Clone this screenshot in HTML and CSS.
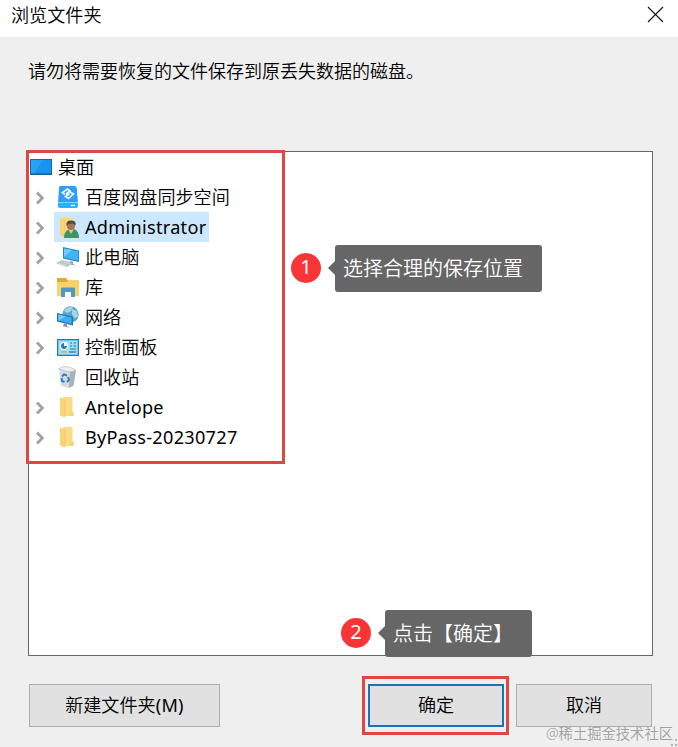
FILE: index.html
```html
<!DOCTYPE html>
<html lang="zh-CN">
<head>
    <meta charset="UTF-8">
    <meta name="viewport" content="width=device-width, initial-scale=1.0">
    <title>浏览文件夹</title>
    <link rel="stylesheet" href="styles.css">
</head>
<body>

<!-- 公用图形 -->
<svg class="defs" width="0" height="0">
    <symbol id="chevron" viewBox="0 0 12 16">
        <path d="M3 3.500 L8.300 9 L3 14.500" fill="none" stroke="#a3a3a3" stroke-width="2.900"/>
    </symbol>
    <symbol id="folder" viewBox="0 0 24 24">
        <path d="M7 2h9.500v14l1 1v4H7z" fill="#fbdc85"/>
        <path d="M4 2.500l5 2v18L4 20.500z" fill="#f8d477"/>
        <path d="M9 4.500v17" stroke="#eec466" stroke-width=".8"/>
        <path d="M14 17h3.500v4H14z" fill="#f6d278"/>
    </symbol>
</svg>

<div class="dialog">
    <header class="titlebar">
        <span class="title">浏览文件夹</span>
        <svg class="close" width="17" height="17" viewBox="0 0 17 17">
            <path d="M1 1L16 16M16 1L1 16" stroke="#111" stroke-width="1.100"/>
        </svg>
    </header>

    <p class="message">请勿将需要恢复的文件保存到原丢失数据的磁盘。</p>

    <div class="tree">
        <div class="row root">
            <svg class="icon" width="24" height="24" viewBox="0 0 24 24">
                <rect x="1.500" y="4.500" width="21" height="15" fill="#1595ee" stroke="#17659c"/>
                <path d="M2 5h12L5 19H2z" fill="#35adf8" opacity=".6"/>
                <path d="M2 19h20" stroke="#0f5f9d"/>
            </svg>
            <span class="label">桌面</span>
        </div>
        <div class="row">
            <svg class="arrow" width="12" height="16"><use href="#chevron"/></svg>
            <svg class="icon" width="24" height="24" viewBox="0 0 24 24">
                <path d="M4.500 1h14q2 0 2.300 2L22 18H2L3 3q0-2 1.500-2z" fill="#2f9dfa"/>
                <path d="M2 17h20v4q0 2-2 2H4q-2 0-2-2z" fill="#25b2f7"/>
                <path d="M2 17.500h20" stroke="#9adfff" stroke-width=".8"/>
                <path d="M15 20.500h4" stroke="#fff" stroke-width="1.300"/>
                <path d="M9 9.500L6.500 7.500l5-3.500 2.500 2-4 3M14 7l3.500 2-5 4.500L9.500 11.500l4-3" fill="none" stroke="#e9f8ff" stroke-width="1.700"/>
            </svg>
            <span class="label">百度网盘同步空间</span>
        </div>
        <div class="row">
            <svg class="arrow" width="12" height="16"><use href="#chevron"/></svg>
            <svg class="icon" width="24" height="24" viewBox="0 0 24 24">
                <use href="#folder"/>
                <path d="M8 23q0-7 5-8.500l5-.5q5 2 5 9z" fill="#419267"/>
                <path d="M12 14l3 5 3-5z" fill="#e7c29b"/>
                <circle cx="15" cy="11" r="4" fill="#a6744f"/>
                <path d="M10.500 11q-1-6 5-5.500 5 0 4 5l-3-2-4 .5z" fill="#514a43"/>
            </svg>
            <span class="label latin selected">Administrator</span>
        </div>
        <div class="row">
            <svg class="arrow" width="12" height="16"><use href="#chevron"/></svg>
            <svg class="icon" width="24" height="24" viewBox="0 0 24 24">
                <path d="M7 2l16 3.500v11.500L7 13.500z" fill="#2388cf"/>
                <path d="M8 3.500l14 3v9L8 12.500z" fill="#3eb3f5"/>
                <path d="M8 3.500l8 1.600L8 12z" fill="#70caf9"/>
                <path d="M14 16l3 .7v2.300l3 1.500-6-1z" fill="#86939b"/>
                <path d="M0 18l6-3 11 3-6 4z" fill="#b9c1c7"/>
                <path d="M2 18l9 2.500M5 16.500l9 2.500" stroke="#d9dfe3" stroke-width=".8"/>
            </svg>
            <span class="label">此电脑</span>
        </div>
        <div class="row">
            <svg class="arrow" width="12" height="16"><use href="#chevron"/></svg>
            <svg class="icon" width="24" height="24" viewBox="0 0 24 24">
                <path d="M1 3h9l2 2.500h11V21H1z" fill="#dfaa32"/>
                <path d="M1 7h10l2-2h10v16H1z" fill="#fbd269"/>
                <path d="M5 22v-8.500q0-1 1-1h12q1 0 1 1V22h-4v-5H9v5z" fill="#4b9bc5"/>
                <path d="M9 17h6v5H9z" fill="#fff"/>
            </svg>
            <span class="label">库</span>
        </div>
        <div class="row">
            <svg class="arrow" width="12" height="16"><use href="#chevron"/></svg>
            <svg class="icon" width="24" height="24" viewBox="0 0 24 24">
                <circle cx="14.500" cy="9.500" r="8.200" fill="#5aa7ca"/>
                <path d="M8 6q4-5 9-4l-2 4-4 2zM16 4l5 2 1 6-4 1-2-4z" fill="#a6d5e7"/>
                <path d="M1 8l16 3.500v9L1 16.500z" fill="#2379b9"/>
                <path d="M2.500 9.500l13 3v6.200L2.500 15.500z" fill="#3eb0f2"/>
                <path d="M2.500 9.500l7.500 2-7.500 4z" fill="#76c9f6"/>
                <path d="M8 18.500l3 .8v2l3 1.500-7-1.500z" fill="#85939c"/>
            </svg>
            <span class="label">网络</span>
        </div>
        <div class="row">
            <svg class="arrow" width="12" height="16"><use href="#chevron"/></svg>
            <svg class="icon" width="24" height="24" viewBox="0 0 24 24">
                <rect x="1.500" y="4.500" width="21" height="16" fill="#69caf1" stroke="#237fa8"/>
                <rect x="3" y="6" width="18" height="13" fill="#a3e0f7"/>
                <circle cx="8" cy="11" r="4" fill="#fff"/>
                <path d="M8 8a3 3 0 1 0 3 3H8z" fill="#237fb6"/>
                <path d="M14 8h2M17.500 8H20M14 11h2M17.500 11H20M14 14h6" stroke="#21739f" stroke-width="1.200"/>
                <path d="M5 17h6" stroke="#e99631" stroke-width="1.200"/>
                <path d="M13 17h7" stroke="#21739f" stroke-width="1.200"/>
            </svg>
            <span class="label">控制面板</span>
        </div>
        <div class="row">
            <span class="arrow"></span>
            <svg class="icon" width="24" height="24" viewBox="0 0 24 24">
                <path d="M3 4l17 1-2.500 15.500L13 23l-8-2z" fill="#d5dade"/>
                <path d="M14 6l6-1-2.500 15.500L13 23z" fill="#aab1b7"/>
                <path d="M2.500 4l5-2.500L13 2l7 3-6 2z" fill="#eef0f2" stroke="#b7bdc2" stroke-width=".7"/>
                <path d="M6 11.500l2-2 3 1M12 12l1 3-2 2M8.500 17L6 16l-.5-3" fill="none" stroke="#2484cd" stroke-width="2"/>
            </svg>
            <span class="label">回收站</span>
        </div>
        <div class="row">
            <svg class="arrow" width="12" height="16"><use href="#chevron"/></svg>
            <svg class="icon" width="24" height="24"><use href="#folder"/></svg>
            <span class="label latin">Antelope</span>
        </div>
        <div class="row">
            <svg class="arrow" width="12" height="16"><use href="#chevron"/></svg>
            <svg class="icon" width="24" height="24"><use href="#folder"/></svg>
            <span class="label latin">ByPass-20230727</span>
        </div>

        <div class="mark mark-tree"></div>
        <div class="step step-one">
            <span class="badge">1</span>
            <span class="tip">选择合理的保存位置</span>
        </div>
        <div class="step step-two">
            <span class="badge">2</span>
            <span class="tip">点击【确定】</span>
        </div>
    </div>

    <footer class="buttons">
        <button type="button" class="btn new-folder">新建文件夹<span class="latin">(M)</span></button>
        <div class="ok-wrap">
            <button type="button" class="btn ok">确定</button>
            <div class="mark mark-ok"></div>
        </div>
        <button type="button" class="btn">取消</button>
    </footer>

    <span class="watermark">@稀土掘金技术社区</span>
    <svg class="grip" width="8" height="8" viewBox="0 0 8 8">
        <path d="M5 0h2v2H5zM1 5h2v2H1zM5 5h2v2H5z" fill="#b3b3b3"/>
    </svg>
</div>

</body>
</html>
```

FILE: styles.css
```css
* {
    box-sizing: border-box;
}
body {
    margin: 0;
    font-family: "Noto Sans", "Noto Sans CJK SC", sans-serif;
    font-size: 18.1px;
    font-weight: 350;
    color: #000;
}
.latin {
    font-weight: 400;
    letter-spacing: 0.3px;
}
.defs {
    position: absolute;
}
.dialog {
    position: relative;
    width: 678px;
    height: 747px;
    background-color: #efefef;
    overflow: hidden;
}
.titlebar {
    display: flex;
    justify-content: space-between;
    align-items: center;
    height: 37px;
    padding: 0 14px 8px 11px;
    background-color: #fff;
}
.title {
    padding-bottom: 2px;
}
.message {
    height: 30px;
    margin: 19px 0 65px 28px;
    line-height: 30px;
    font-size: 18px;
}
.tree {
    position: relative;
    width: 625px;
    height: 505px;
    margin-left: 28px;
    background-color: #fff;
    border: 1px solid #666;
}
.row {
    display: flex;
    align-items: center;
    height: 30px;
    padding-left: 5px;
}
.root {
    padding-left: 0;
}
.arrow {
    width: 12px;
    margin-right: 10px;
}
.icon {
    flex: none;
}
.label {
    height: 30px;
    padding: 0 4px 0 5px;
    line-height: 30px;
}
.row:has(.selected) .icon {
    height: 30px;
    margin-left: -2px;
    padding-left: 2px;
    background-color: #cce8ff;
    width: 26px;
}
.selected {
    padding-right: 3px;
    background-color: #cce8ff;
}
.mark {
    position: absolute;
    border: 3px solid #e04644;
}
.mark-tree {
    top: -2px;
    left: -3px;
    width: 259px;
    height: 314px;
}
.step {
    position: absolute;
    display: flex;
    align-items: flex-start;
    gap: 14px;
    color: #fff;
}
.step-one {
    top: 93px;
    left: 262px;
}
.step-two {
    top: 458px;
    left: 312px;
}
.badge {
    width: 30px;
    height: 30px;
    margin-top: 8px;
    border-radius: 50%;
    background-color: #fa3535;
    line-height: 28px;
    text-align: center;
    font-size: 20px;
    font-weight: 400;
}
.tip {
    position: relative;
    height: 47px;
    padding: 0 19px 0 8px;
    border-radius: 3px;
    background-color: #666;
    line-height: 48px;
    white-space: nowrap;
    font-size: 20px;
}
.tip::before {
    content: "";
    position: absolute;
    top: 16px;
    left: -7px;
    border: 7px solid transparent;
    border-left: 0;
    border-right-color: #666;
}
.buttons {
    display: flex;
    padding: 28px 26px 0 29px;
}
.btn {
    width: 136px;
    height: 43px;
    padding: 0 0 3px;
    border: 1px solid #adadad;
    background-color: #e1e1e1;
    font: inherit;
    color: #000;
}
.new-folder {
    width: 191px;
}
.ok-wrap {
    position: relative;
    margin: 0 12px 0 148px;
}
.ok {
    border: 2px solid #1a75b8;
}
.mark-ok {
    top: -8px;
    left: -6px;
    width: 147px;
    height: 59px;
}
.watermark {
    position: absolute;
    right: 5px;
    bottom: 3px;
    font-size: 14.3px;
    line-height: 20px;
    color: #a0a0a0;
}
.grip {
    position: absolute;
    right: 0;
    bottom: 0;
}
```
